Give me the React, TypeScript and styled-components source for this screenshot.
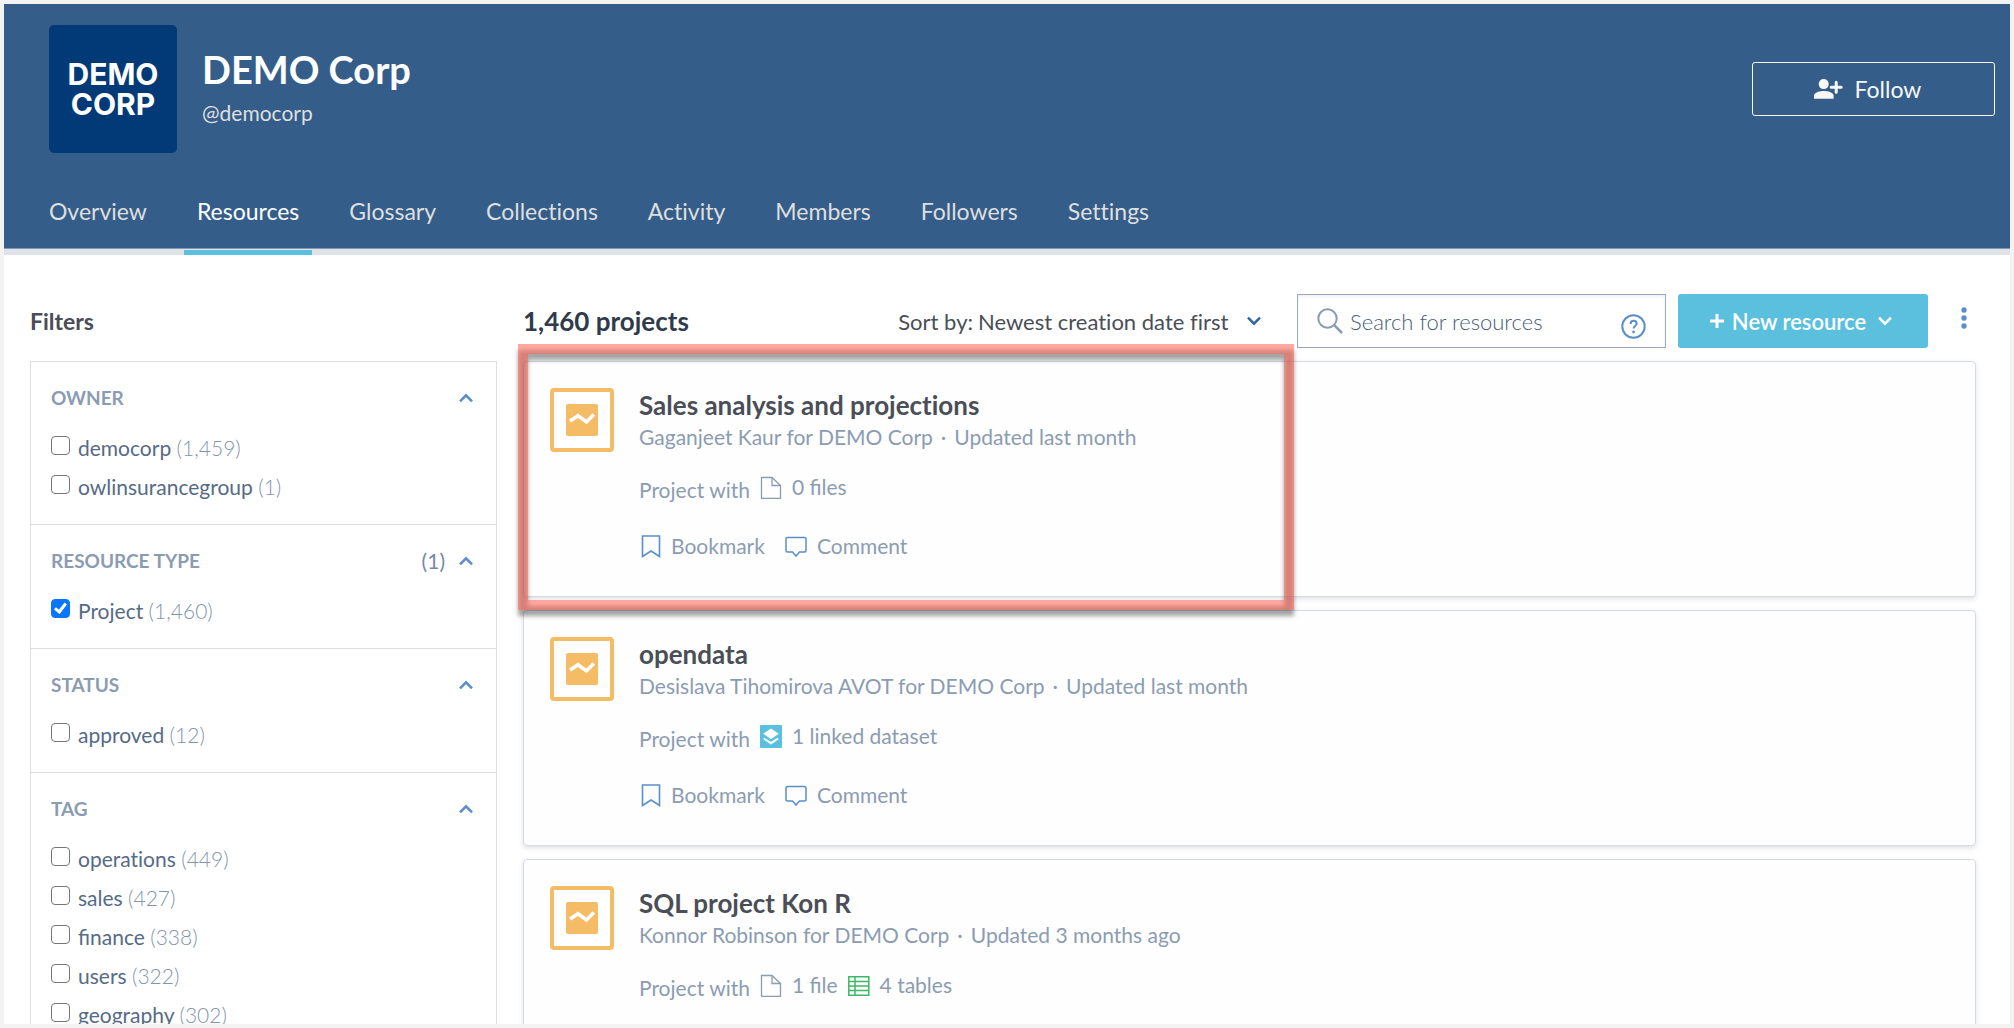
import React from 'react';
import styled, { createGlobalStyle } from 'styled-components';

const color = {
  frame: '#f3f3f3',
  navy: '#345e89',
  logo: '#023a78',
  cyan: '#5bc0de',
  link: '#5b8fc9',
  muted: '#8b9cb2',
  slate: '#566b86',
  ink: '#4a4e57',
  amber: '#f5bc66',
  line: '#dcdfe2',
  cardLine: '#d5dbe5',
};

const GlobalStyle = createGlobalStyle`
  *, *::before, *::after { box-sizing: border-box; }
  body {
    margin: 0;
    background: #fff;
    color: ${color.ink};
    font-family: Lato, "Liberation Sans", sans-serif;
    font-variant-ligatures: none;
  }
  button, input, select { font: inherit; font-variant-ligatures: inherit; color: inherit; }
  h1, h2, h3, p, ul { margin: 0; padding: 0; }
  ul { list-style: none; }
  a { color: inherit; text-decoration: none; }
  svg { display: block; flex: none; }
`;

const Page = styled.div`
  height: 100vh;
  overflow: hidden;
  border: 4px solid ${color.frame};
`;

const Header = styled.header`
  background: ${color.navy};
  border-bottom: 6px solid #dfe3e7;
  box-shadow: inset 0 -1px 0 #7f98b4;
`;

const Profile = styled.div`
  display: flex;
  align-items: flex-start;
  gap: 25px;
  padding: 21px 15px 24px 45px;
`;

const Logo = styled.div`
  display: flex;
  align-items: center;
  justify-content: center;
  flex: none;
  width: 128px;
  height: 128px;
  border-radius: 5px;
  background: ${color.logo};
  color: #fff;
  font: 700 30px/30px Inter, sans-serif;
  text-align: center;
`;

const Identity = styled.div`
  flex: 1;
  padding-top: 20px;
`;

const OrgName = styled.h1`
  color: #fff;
  font-size: 38px;
  line-height: 48px;
  font-weight: 700;
`;

const Handle = styled.p`
  margin-top: 5px;
  color: #dfdfdf;
  font-size: 21px;
  line-height: 30px;
`;

const FollowButton = styled.button`
  display: flex;
  align-items: center;
  justify-content: center;
  gap: 12px;
  width: 243px;
  height: 54px;
  margin-top: 37px;
  padding: 0 12px 0 0;
  border: 1px solid #f7f7f7;
  border-radius: 3px;
  background: transparent;
  color: #f7f7f7;
  font-size: 23px;
`;

const Tabs = styled.nav`
  display: flex;
  gap: 24px;
  padding: 0 32px;
`;

const Tab = styled.a<{ $active?: boolean }>`
  position: relative;
  padding: 20px 13px 24px;
  color: ${(p) => (p.$active ? '#fff' : '#dfdfdf')};
  font-size: 23px;
  line-height: 28px;

  &::after {
    content: '';
    display: ${(p) => (p.$active ? 'block' : 'none')};
    position: absolute;
    left: 0;
    right: 0;
    bottom: -6px;
    height: 5px;
    background: ${color.cyan};
  }
`;

const Content = styled.main`
  display: grid;
  grid-template-columns: minmax(0, 467px) minmax(0, 1fr);
  gap: 26px;
  padding: 39px 34px 0 26px;
`;

const FiltersTitle = styled.h2`
  font-size: 23px;
  line-height: 54px;
  font-weight: 700;
`;

const FilterPanel = styled.div`
  margin-top: 13px;
  border: 1px solid ${color.line};
  border-top: 0;
`;

const FilterSection = styled.section`
  padding: 23px 20px 18px;
  border-top: 1px solid ${color.line};
`;

const FilterHeader = styled.button`
  display: flex;
  align-items: center;
  gap: 14px;
  width: 100%;
  margin-bottom: 17px;
  padding: 0 3px 0 0;
  border: 0;
  background: none;
  color: ${color.link};
  line-height: 26px;
`;

const FilterName = styled.span`
  flex: 1;
  color: ${color.muted};
  font-size: 19px;
  font-weight: 700;
  text-align: left;
`;

const FilterSelected = styled.span`
  color: #738aa6;
  font-size: 21px;
`;

const Option = styled.label`
  display: flex;
  align-items: flex-start;
  gap: 8px;
  color: ${color.slate};
  font-size: 21px;
  line-height: 39px;
`;

const Checkbox = styled.input`
  appearance: none;
  flex: none;
  display: grid;
  place-items: center;
  width: 19px;
  height: 19px;
  margin: 8px 0 0;
  border: 1px solid #767676;
  border-radius: 4px;
  background: #fff;

  &:checked {
    border-color: #0a75ff;
    background: #0a75ff;
  }

  &:checked::after {
    content: '';
    width: 7px;
    height: 12px;
    margin-bottom: 3px;
    border: solid #fff;
    border-width: 0 3px 3px 0;
    transform: rotate(38deg);
  }
`;

const OptionName = styled.span<{ $ligature: boolean }>`
  font-variant-ligatures: ${(p) => (p.$ligature ? 'normal' : 'none')};
`;

const OptionCount = styled.span`
  color: #8295ae;
  font-weight: 300;
`;

const Toolbar = styled.div`
  display: flex;
  align-items: center;
  gap: 12px;
  height: 54px;
  margin-bottom: 13px;
`;

const ResultCount = styled.h2`
  flex: 1;
  color: #2f3b4a;
  font-size: 26px;
  font-weight: 700;
  white-space: nowrap;
`;

const Sort = styled.label`
  display: flex;
  align-items: center;
  gap: 5px;
  margin-right: 24px;
  color: ${color.ink};
  font-size: 22px;
  white-space: nowrap;

  svg { margin-left: 13px; color: #34689f; }
`;

const SortSelect = styled.select`
  appearance: none;
  padding: 0;
  border: 0;
  background: none;
`;

const Search = styled.div`
  display: flex;
  align-items: center;
  gap: 7px;
  flex: 0 1 369px;
  min-width: 0;
  height: 54px;
  padding: 0 19px;
  border: 1px solid #9aa9bf;
  box-shadow: inset 0 2px 3px rgba(0, 0, 0, 0.06);
  color: ${color.muted};
`;

const SearchInput = styled.input`
  flex: 1;
  min-width: 0;
  padding: 0;
  border: 0;
  outline: 0;
  background: none;
  font-size: 22px;

  &::placeholder {
    color: #465c7a;
    font-weight: 300;
    opacity: 1;
  }
`;

const HelpButton = styled.button`
  align-self: flex-end;
  padding: 0 0 8px;
  border: 0;
  background: none;
  color: ${color.link};
`;

const NewButton = styled.button`
  display: flex;
  align-items: center;
  justify-content: center;
  gap: 8px;
  width: 250px;
  height: 54px;
  padding: 0 4px 0 0;
  border: 0;
  border-radius: 3px;
  background: ${color.cyan};
  color: #fff;
  font-size: 22px;
  font-weight: 600;

  svg:last-child { margin-left: 4px; }
`;

const MenuButton = styled.button`
  display: flex;
  justify-content: center;
  width: 24px;
  margin-left: 12px;
  padding: 0;
  border: 0;
  background: none;
  color: ${color.link};
`;

const CardList = styled.ul`
  display: flex;
  flex-direction: column;
  gap: 13px;
`;

const CardItem = styled.li`
  position: relative;
`;

const Card = styled.article`
  display: flex;
  gap: 25px;
  padding: 26px 26px 35px;
  border: 1px solid ${color.cardLine};
  border-radius: 4px;
  background: #fefefe;
  box-shadow: 0 2px 5px rgba(60, 70, 90, 0.16);
`;

const Highlight = styled.div`
  position: absolute;
  z-index: 1;
  top: -17px;
  left: -5px;
  width: 776px;
  height: 266px;
  border: 10px solid rgba(255, 99, 84, 0.55);
  filter: drop-shadow(0 6px 2px rgba(0, 0, 0, 0.65));
  pointer-events: none;
`;

const ResourceBadge = styled.div`
  display: grid;
  place-items: center;
  flex: none;
  width: 64px;
  height: 64px;
  border: 4px solid ${color.amber};
  border-radius: 4px;
  background: #fff;
`;

const CardBody = styled.div`
  flex: 1;
  color: ${color.muted};
  font-size: 21px;
  line-height: 30px;
`;

const CardTitle = styled.h3`
  color: ${color.ink};
  font-size: 26px;
  line-height: 34px;
  font-weight: 700;
`;

const Byline = styled.p`
  display: flex;
  gap: 8px;
`;

const Contents = styled.div`
  display: flex;
  gap: 10px;
  height: 33px;
  margin-top: 20px;
`;

const ContentsLabel = styled.span`
  align-self: flex-end;
`;

const ContentsItem = styled.span`
  display: flex;
  align-items: center;
  align-self: flex-start;
  gap: 10px;
  font-variant-ligatures: normal;
`;

const Actions = styled.div`
  display: flex;
  gap: 20px;
  margin-top: 26px;
`;

const ActionButton = styled.button`
  display: flex;
  align-items: center;
  gap: 10px;
  padding: 0;
  border: 0;
  background: none;

  svg { color: ${color.link}; }
`;

const Chevron = ({ up }: { up?: boolean }) => (
  <svg width="14" height="10" viewBox="0 0 14 10" fill="none" stroke="currentColor" strokeWidth="2.6" aria-hidden="true">
    <path d={up ? 'M1 8.3 7 2.3l6 6' : 'M1 1.7l6 6 6-6'} />
  </svg>
);

const FollowIcon = () => (
  <svg width="29" height="20" viewBox="0 0 29 20" fill="currentColor" aria-hidden="true">
    <circle cx="9.7" cy="5.1" r="5" />
    <path d="M0 19.8v-3.2c0-3.2 6.4-4.5 9.8-4.5s9.8 1.3 9.8 4.5v3.2z" />
    <path d="M22.2 3.2v10M17.2 8.2h10" stroke="currentColor" strokeWidth="3" strokeLinecap="round" />
  </svg>
);

const SearchIcon = () => (
  <svg width="26" height="26" viewBox="0 0 26 26" fill="none" stroke="currentColor" strokeWidth="2" aria-hidden="true">
    <circle cx="10.5" cy="10.5" r="9.2" />
    <path d="M17.2 17.2 25 25" strokeWidth="2.5" />
  </svg>
);

const HelpIcon = () => (
  <svg width="25" height="25" viewBox="0 0 25 25" fill="none" stroke="currentColor" strokeWidth="2" aria-hidden="true">
    <circle cx="12.5" cy="12.5" r="11.2" />
    <path d="M9.6 9.9c0-2 1.3-3.1 3-3.1s3 1.100 3 2.700c0 2.400-3 2.500-3 5.100" />
    <circle cx="12.6" cy="18" r="1.4" fill="currentColor" stroke="none" />
  </svg>
);

const PlusIcon = () => (
  <svg width="14" height="14" viewBox="0 0 14 14" stroke="currentColor" strokeWidth="3" aria-hidden="true">
    <path d="M7 0v14M0 7h14" />
  </svg>
);

const DotsIcon = () => (
  <svg width="8" height="28" viewBox="0 0 8 28" fill="currentColor" aria-hidden="true">
    <circle cx="4" cy="3" r="2.7" />
    <circle cx="4" cy="11" r="2.7" />
    <circle cx="4" cy="19" r="2.7" />
  </svg>
);

const ProjectIcon = () => (
  <svg width="32" height="32" viewBox="0 0 32 32" fill="none" aria-hidden="true">
    <rect width="32" height="32" rx="2" fill={color.amber} />
    <path d="M4 17l8-5.200 8.500 6.200 7.300-7.500" stroke="#fff" strokeWidth="3.6" />
  </svg>
);

const FileIcon = () => (
  <svg width="22" height="24" viewBox="0 0 22 24" fill="none" stroke={color.muted} strokeWidth="1.3" aria-hidden="true">
    <path d="M1.500 2.500H12l8.500 8v13h-19z" />
    <path d="M12 2.500V10.500h8.500" />
  </svg>
);

const DatasetIcon = () => (
  <svg width="22" height="24" viewBox="0 0 22 24" fill="none" aria-hidden="true">
    <rect y="1" width="22" height="23" rx="1" fill={color.cyan} />
    <path d="M11 4.500l7.800 5.200L11 15 3.200 9.700z" fill="#fff" />
    <path d="M3.800 14.500l7.200 4.700 7.200-4.700" stroke="#fff" strokeWidth="2" />
  </svg>
);

const TableIcon = () => (
  <svg width="22" height="24" viewBox="0 0 22 24" fill="none" stroke="#3fb768" strokeWidth="1.5" aria-hidden="true">
    <path d="M.8 3.800h20v18.400h-20zM.8 8.400h20M.8 13h20M.8 17.600h20M7 3.800v18.400" />
  </svg>
);

const BookmarkIcon = () => (
  <svg width="22" height="24" viewBox="0 0 22 24" fill="none" stroke="currentColor" strokeWidth="1.6" aria-hidden="true">
    <path d="M3.500 2h17v20.500L12 17l-8.500 5.500z" />
  </svg>
);

const CommentIcon = () => (
  <svg width="22" height="24" viewBox="0 0 22 24" fill="none" stroke="currentColor" strokeWidth="1.5" aria-hidden="true">
    <path d="M2.500 3.500h17q1.500 0 1.500 1.500v11.500q0 1.500-1.500 1.500h-5L11 22l-3.500-4h-5Q1 18 1 16.500V5q0-1.500 1.500-1.500z" />
  </svg>
);

const tabs = ['Overview', 'Resources', 'Glossary', 'Collections', 'Activity', 'Members', 'Followers', 'Settings'];

type Filter = { name: string; selected?: number; options: { name: string; count: string; checked?: boolean }[] };

const filters: Filter[] = [
  { name: 'OWNER', options: [{ name: 'democorp', count: '1,459' }, { name: 'owlinsurancegroup', count: '1' }] },
  { name: 'RESOURCE TYPE', selected: 1, options: [{ name: 'Project', count: '1,460', checked: true }] },
  { name: 'STATUS', options: [{ name: 'approved', count: '12' }] },
  {
    name: 'TAG',
    options: [
      { name: 'operations', count: '449' },
      { name: 'sales', count: '427' },
      { name: 'finance', count: '338' },
      { name: 'users', count: '322' },
      { name: 'geography', count: '302' },
    ],
  },
];

const icons = { file: FileIcon, dataset: DatasetIcon, table: TableIcon };

type Project = {
  title: string;
  owner: string;
  updated: string;
  contents: { kind: keyof typeof icons; label: string }[];
  highlighted?: boolean;
  actions?: boolean;
};

const projects: Project[] = [
  {
    title: 'Sales analysis and projections',
    owner: 'Gaganjeet Kaur for DEMO Corp',
    updated: 'Updated last month',
    contents: [{ kind: 'file', label: '0 files' }],
    highlighted: true,
    actions: true,
  },
  {
    title: 'opendata',
    owner: 'Desislava Tihomirova AVOT for DEMO Corp',
    updated: 'Updated last month',
    contents: [{ kind: 'dataset', label: '1 linked dataset' }],
    actions: true,
  },
  {
    title: 'SQL project Kon R',
    owner: 'Konnor Robinson for DEMO Corp',
    updated: 'Updated 3 months ago',
    contents: [{ kind: 'file', label: '1 file' }, { kind: 'table', label: '4 tables' }],
  },
];

function FilterGroup({ filter }: { filter: Filter }) {
  return (
    <FilterSection>
      <FilterHeader type="button" aria-expanded="true">
        <FilterName>{filter.name}</FilterName>
        {filter.selected && <FilterSelected>({filter.selected})</FilterSelected>}
        <Chevron up />
      </FilterHeader>
      {filter.options.map((option) => (
        <Option key={option.name}>
          <Checkbox type="checkbox" defaultChecked={option.checked} />
          <span>
            <OptionName $ligature={option.name.startsWith('fi')}>{option.name}</OptionName>{' '}
            <OptionCount>({option.count})</OptionCount>
          </span>
        </Option>
      ))}
    </FilterSection>
  );
}

function ProjectCard({ project }: { project: Project }) {
  return (
    <CardItem>
      <Card>
        <ResourceBadge>
          <ProjectIcon />
        </ResourceBadge>
        <CardBody>
          <CardTitle>
            <a href="#project">{project.title}</a>
          </CardTitle>
          <Byline>
            <span>{project.owner}</span>
            <span>·</span>
            <span>{project.updated}</span>
          </Byline>
          <Contents>
            <ContentsLabel>Project with</ContentsLabel>
            {project.contents.map(({ kind, label }) => {
              const Icon = icons[kind];
              return (
                <ContentsItem key={kind}>
                  <Icon />
                  {label}
                </ContentsItem>
              );
            })}
          </Contents>
          {project.actions && (
            <Actions>
              <ActionButton type="button">
                <BookmarkIcon />
                Bookmark
              </ActionButton>
              <ActionButton type="button">
                <CommentIcon />
                Comment
              </ActionButton>
            </Actions>
          )}
        </CardBody>
      </Card>
      {project.highlighted && <Highlight />}
    </CardItem>
  );
}

export default function App() {
  return (
    <Page>
      <GlobalStyle />
      <Header>
        <Profile>
          <Logo>
            <span>
              DEMO
              <br />
              CORP
            </span>
          </Logo>
          <Identity>
            <OrgName>DEMO Corp</OrgName>
            <Handle>@democorp</Handle>
          </Identity>
          <FollowButton type="button">
            <FollowIcon />
            Follow
          </FollowButton>
        </Profile>
        <Tabs>
          {tabs.map((tab) => (
            <Tab key={tab} href={`#${tab.toLowerCase()}`} $active={tab === 'Resources'}>
              {tab}
            </Tab>
          ))}
        </Tabs>
      </Header>
      <Content>
        <aside>
          <FiltersTitle>Filters</FiltersTitle>
          <FilterPanel>
            {filters.map((filter) => (
              <FilterGroup key={filter.name} filter={filter} />
            ))}
          </FilterPanel>
        </aside>
        <section>
          <Toolbar>
            <ResultCount>1,460 projects</ResultCount>
            <Sort>
              Sort by:
              <SortSelect>
                <option>Newest creation date first</option>
              </SortSelect>
              <Chevron />
            </Sort>
            <Search>
              <SearchIcon />
              <SearchInput type="text" placeholder="Search for resources" aria-label="Search for resources" />
              <HelpButton type="button" aria-label="Search help">
                <HelpIcon />
              </HelpButton>
            </Search>
            <NewButton type="button">
              <PlusIcon />
              New resource
              <Chevron />
            </NewButton>
            <MenuButton type="button" aria-label="More options">
              <DotsIcon />
            </MenuButton>
          </Toolbar>
          <CardList>
            {projects.map((project) => (
              <ProjectCard key={project.title} project={project} />
            ))}
          </CardList>
        </section>
      </Content>
    </Page>
  );
}
